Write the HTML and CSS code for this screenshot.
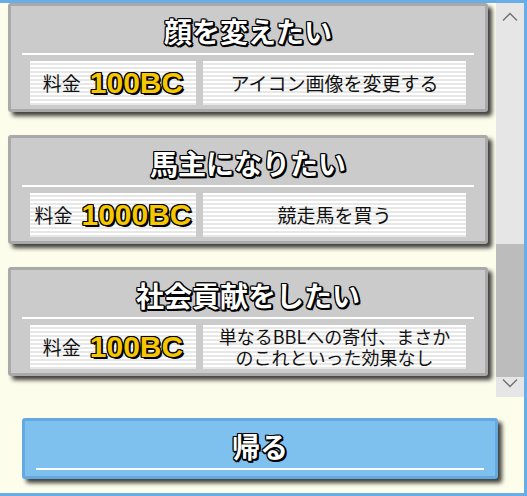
FILE: index.html
```html
<!DOCTYPE html>
<html lang="ja">
  <head>
    <meta charset="UTF-8" />
    <meta name="viewport" content="width=device-width, initial-scale=1.0" />
    <title>ショップ</title>
    <link rel="stylesheet" href="styles.css">
  </head>

  <body>
    <div class="frame">
      <!--メニュー一覧とスクロールバー-->
      <div class="viewport">
        <div class="list">
          <div class="card">
            <div class="title">顔を変えたい</div>
            <div class="rule"></div>
            <div class="row">
              <div class="box price">料金<span class="cost">100BC</span></div>
              <div class="box desc">アイコン画像を変更する</div>
            </div>
          </div>

          <div class="card">
            <div class="title">馬主になりたい</div>
            <div class="rule"></div>
            <div class="row">
              <div class="box price">料金<span class="cost">1000BC</span></div>
              <div class="box desc">競走馬を買う</div>
            </div>
          </div>

          <div class="card">
            <div class="title">社会貢献をしたい</div>
            <div class="rule"></div>
            <div class="row">
              <div class="box price">料金<span class="cost">100BC</span></div>
              <div class="box desc two-lines">単なるBBLへの寄付、まさか<br />のこれといった効果なし</div>
            </div>
          </div>
        </div>

        <div class="scrollbar">
          <div class="arrow">
            <svg width="28" height="20" viewBox="0 0 28 20"><path d="M7 17.5 L14 10.5 L21 17.5" fill="none" stroke="#707070" stroke-width="1.3" /></svg>
          </div>
          <div class="track"><div class="thumb"></div></div>
          <div class="arrow">
            <svg width="28" height="20" viewBox="0 0 28 20"><path d="M7 2.5 L14 9.5 L21 2.5" fill="none" stroke="#707070" stroke-width="1.3" /></svg>
          </div>
        </div>
      </div>

      <!--戻るボタン-->
      <div class="footer">
        <div class="back">
          <div class="title">帰る</div>
          <div class="rule"></div>
        </div>
      </div>
    </div>
  </body>
</html>
```

FILE: styles.css
```css
body {
  margin: 0;
  padding: 0;
  background: #fdfdec;
  font-family: 'Noto Sans CJK JP', sans-serif;
}

.frame {
  width: 524px;
  height: 490px;
  border-top: 3px solid #68ade5;
  border-right: 3px solid #68ade5;
  border-bottom: 3px solid #68ade5;
  display: flex;
  flex-direction: column;
}

.viewport {
  height: 394px;
  display: flex;
}

.list {
  flex: 1;
  overflow: hidden;
}

.card {
  height: 109px;
  box-sizing: border-box;
  margin: 0 8px 23px 8px;
  border: 3px solid #a9a9a9;
  border-radius: 3px;
  background: #cbcbcb;
  box-shadow: 4px 4px 4px rgba(0, 0, 0, 0.75);
}

.title {
  height: 47px;
  box-sizing: border-box;
  padding-top: 3px;
  line-height: 44px;
  text-align: center;
  font-size: 28px;
  font-weight: bold;
  color: #fff;
  text-shadow: -1px -1px 0 #000, 1px -1px 0 #000, -1px 1px 0 #000,
    1px 1px 0 #000, 2px 2px 0 #000, 0 2px 0 #000, 2px 0 0 #000,
    0 -1px 0 #000, -1px 0 0 #000;
}

.rule {
  height: 2px;
  margin: 0 11px;
  background: #fff;
}

.row {
  display: flex;
  gap: 7px;
  margin-top: 6px;
  padding: 0 19px;
}

.box {
  height: 44px;
  display: flex;
  align-items: center;
  justify-content: center;
  text-align: center;
  font-size: 19px;
  line-height: 22px;
  color: #111;
  background: repeating-linear-gradient(
    #ffffff 0px,
    #ffffff 2px,
    #e7e7e7 2px,
    #e7e7e7 4px
  );
}

.two-lines {
  font-size: 18px;
  line-height: 21px;
}

.price {
  width: 166px;
}

.desc {
  width: 263px;
}

.cost {
  margin-left: 9px;
  font-family: 'Liberation Sans', Arial, sans-serif;
  font-size: 30px;
  font-weight: bold;
  color: #f4c700;
  text-shadow: -1px -1px 0 #000, 1px -1px 0 #000, -1px 1px 0 #000,
    1px 1px 0 #000, 0 -1px 0 #000, 0 1px 0 #000, -1px 0 0 #000, 1px 0 0 #000,
    2px 2px 0 #000;
}

.scrollbar {
  width: 28px;
  background: #e6e6e6;
  display: flex;
  flex-direction: column;
}

.arrow {
  height: 20px;
}

.arrow svg {
  display: block;
}

.track {
  flex: 1;
  display: flex;
  flex-direction: column;
  justify-content: flex-end;
}

.thumb {
  height: 133px;
  background: #bcbcbc;
}

.footer {
  flex: 1;
  padding: 21px 0 0 22px;
}

.back {
  width: 476px;
  height: 61px;
  box-sizing: border-box;
  border: 3px solid #64a9e2;
  border-radius: 3px;
  background: #7ec1ef;
  box-shadow: 4px 4px 4px rgba(0, 0, 0, 0.75);
}

.back .rule {
  margin: 0 11px;
}
```
